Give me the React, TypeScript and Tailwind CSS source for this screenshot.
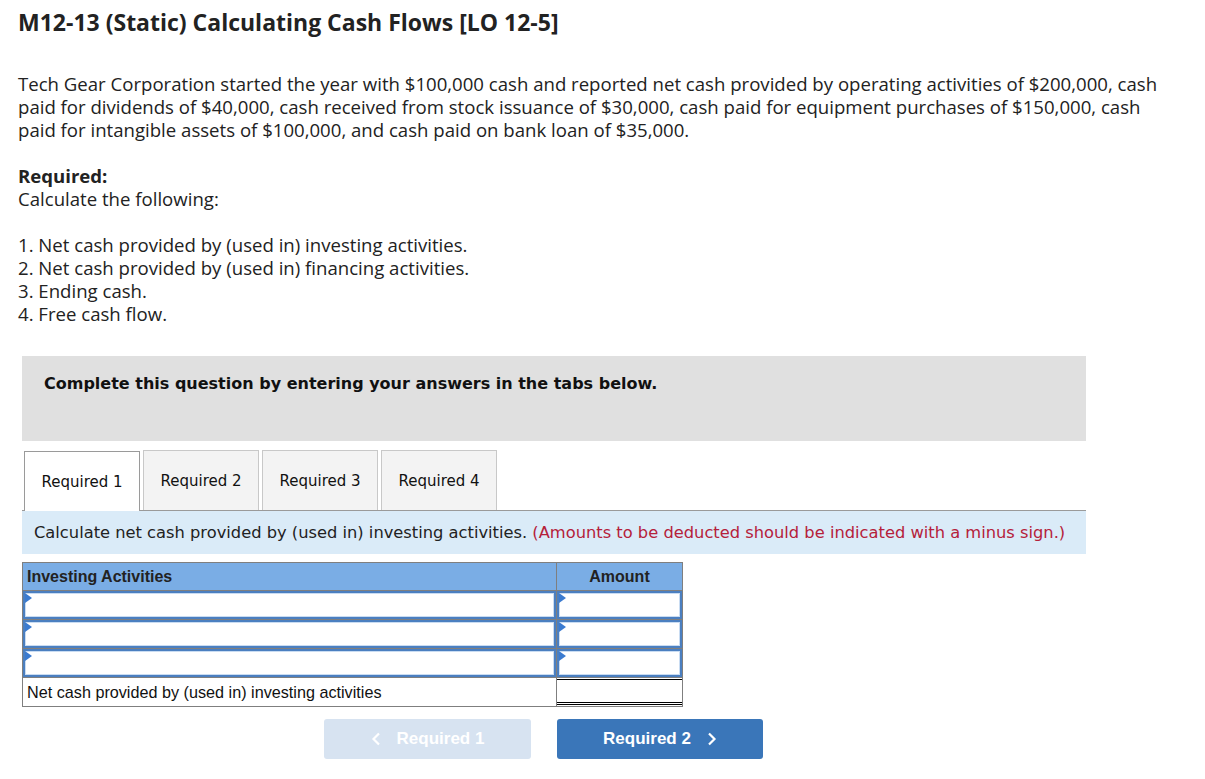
import React from "react";

const tabs = ["Required 1", "Required 2", "Required 3", "Required 4"];

function InputCell({ wide }: { wide?: boolean }) {
  return (
    <td className={`p-0 ${wide ? "" : "border-l border-[#7f7f7f]"}`}>
      <div className="relative h-[28px] border-2 border-[#4b7fc0] bg-white">
        <div className="h-full w-full border border-[#c9dcf2]" />
        <span className="absolute left-0 top-0 h-0 w-0 border-y-[5px] border-l-[7px] border-y-transparent border-l-[#3b7bd0]" />
      </div>
    </td>
  );
}

export default function App() {
  return (
    <div className="min-h-screen bg-white text-[#222] font-['Open_Sans',sans-serif]">
      <div className="pl-[18px] pr-[18px] pt-[7px]">
        <h1 className="text-[23px] font-bold leading-[30px] text-[#222]">
          M12-13 (Static) Calculating Cash Flows [LO 12-5]
        </h1>

        <p className="mt-[35px] w-[1160px] text-[18.6px] leading-[23px]">
          Tech Gear Corporation started the year with $100,000 cash and reported net cash provided by
          operating activities of $200,000, cash paid for dividends of $40,000, cash received from stock
          issuance of $30,000, cash paid for equipment purchases of $150,000, cash paid for intangible
          assets of $100,000, and cash paid on bank loan of $35,000.
        </p>

        <p className="mt-[23px] text-[18.6px] leading-[23px]">
          <span className="font-bold">Required:</span>
          <br />
          Calculate the following:
        </p>

        <ol className="mt-[23px] text-[18.6px] leading-[23px]">
          <li>1. Net cash provided by (used in) investing activities.</li>
          <li>2. Net cash provided by (used in) financing activities.</li>
          <li>3. Ending cash.</li>
          <li>4. Free cash flow.</li>
        </ol>
      </div>

      <div className="ml-[22px] w-[1064px] font-['DejaVu_Sans',sans-serif]">
        <div className="mt-[31px] h-[85px] bg-[#e0e0e0] pl-[22px] pt-[16px]">
          <p className="text-[16px] font-bold text-[#111]">
            Complete this question by entering your answers in the tabs below.
          </p>
        </div>

        <div className="mt-[9px] flex items-end gap-[3px] pl-[2px]">
          {tabs.map((t, i) => (
            <div
              key={t}
              className={`flex h-[60px] w-[116px] items-center justify-center pt-[2px] text-[15px] text-[#111] ${
                i === 0
                  ? "relative -mb-px border border-b-0 border-[#9a9a9a] bg-white"
                  : "border border-b-0 border-[#c8c8c8] bg-[#f3f3f3]"
              }`}
            >
              {t}
            </div>
          ))}
        </div>

        <div className="flex h-[44px] items-center border-t border-[#9a9a9a] bg-[#daebf8] pl-[12px] pt-[2px] text-[16.3px] text-[#222]">
          <span>
            Calculate net cash provided by (used in) investing activities.{" "}
            <span className="text-[#b5213b]">
              (Amounts to be deducted should be indicated with a minus sign.)
            </span>
          </span>
        </div>

        <table className="mt-[8px] w-[661px] border-collapse border border-[#7f7f7f] font-['Liberation_Sans',Arial,sans-serif]">
          <thead>
            <tr className="h-[28px] bg-[#7aade5]">
              <th className="pl-[4px] text-left text-[16px] font-bold text-[#222]">Investing Activities</th>
              <th className="w-[126px] border-l border-[#7f7f7f] text-center text-[16px] font-bold text-[#222]">
                Amount
              </th>
            </tr>
          </thead>
          <tbody>
            {[0, 1, 2].map((r) => (
              <tr key={r} className="border-t border-[#7f7f7f]">
                <InputCell wide />
                <InputCell />
              </tr>
            ))}
            <tr className="h-[28px] border-t border-[#7f7f7f]">
              <td className="pl-[4px] text-[16.2px] text-[#111]">
                Net cash provided by (used in) investing activities
              </td>
              <td className="border-l border-[#7f7f7f] p-0">
                <div className="mt-[1px] h-[27px] border-t border-black">
                  <div className="mt-[22px] border-y border-black pt-[1px]" />
                </div>
              </td>
            </tr>
          </tbody>
        </table>

        <div className="mt-[12px] flex gap-[26px] pl-[302px] font-['Liberation_Sans',Arial,sans-serif]">
          <button className="flex h-[40px] w-[207px] items-center justify-center gap-[16px] rounded-[3px] bg-[#d7e3f1] text-[17px] font-bold text-white">
            <svg width="10" height="14" viewBox="0 0 10 14">
              <path d="M8 1.5 L2.5 7 L8 12.5" fill="none" stroke="white" strokeWidth="2.2" />
            </svg>
            Required 1
          </button>
          <button className="flex h-[40px] w-[206px] items-center justify-center gap-[16px] rounded-[3px] bg-[#3a76b9] text-[17px] font-bold text-white">
            Required 2
            <svg width="10" height="14" viewBox="0 0 10 14">
              <path d="M2 1.5 L7.5 7 L2 12.5" fill="none" stroke="white" strokeWidth="2.2" />
            </svg>
          </button>
        </div>
      </div>
    </div>
  );
}
